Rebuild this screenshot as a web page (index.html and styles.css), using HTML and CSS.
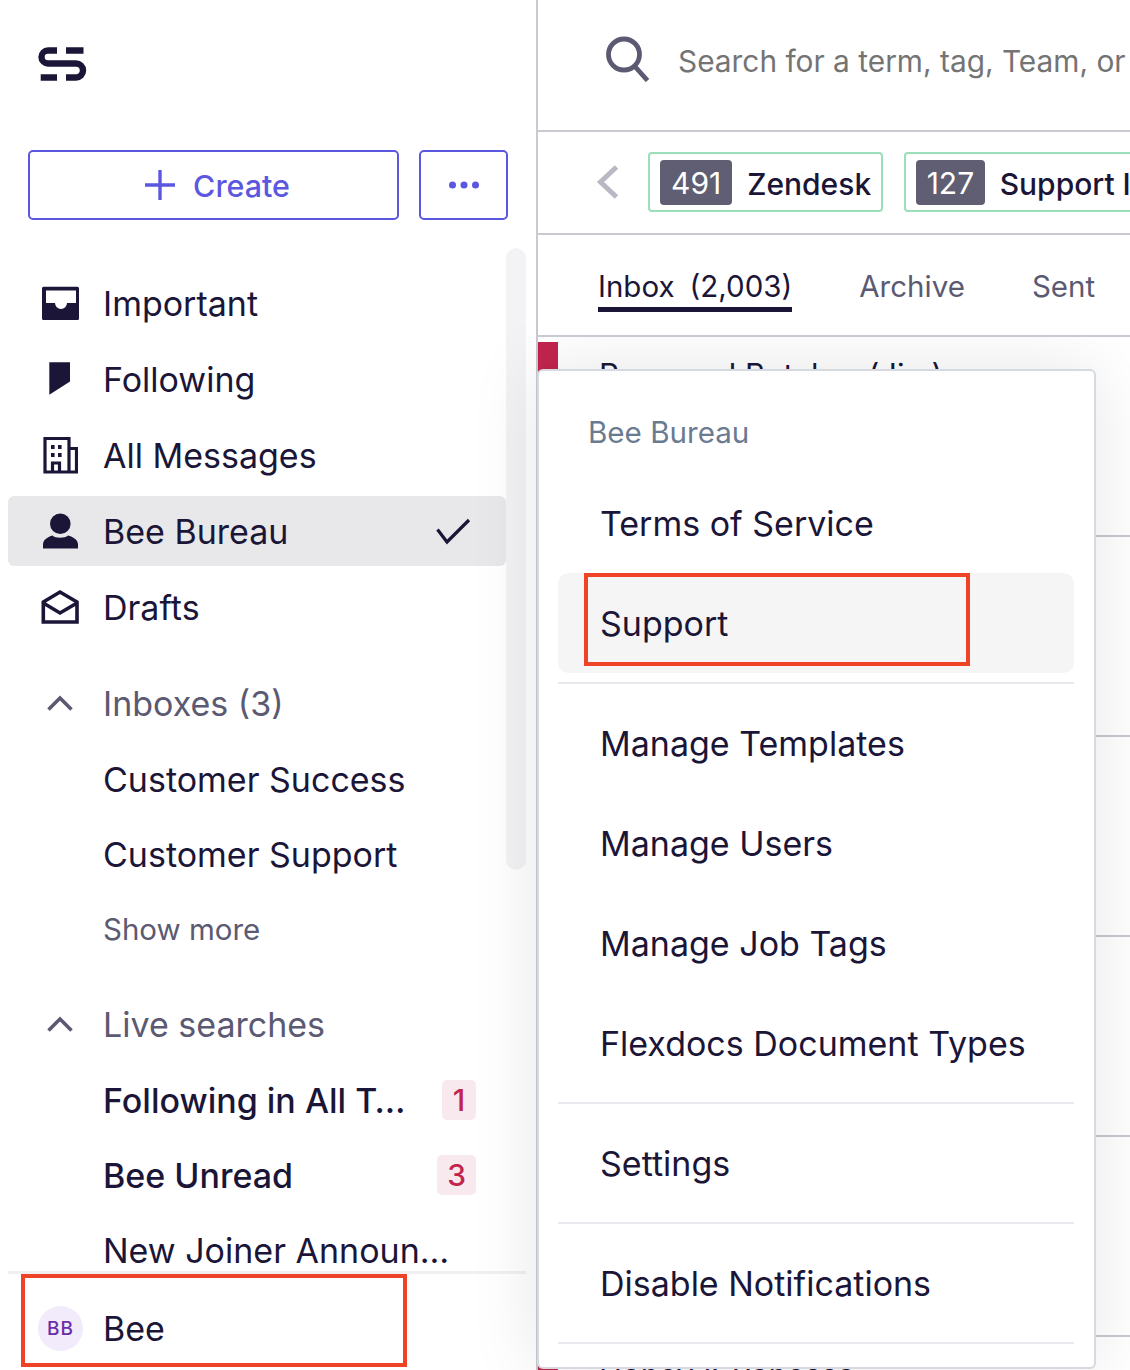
FILE: index.html
```html
<!DOCTYPE html>
<html lang="en">
<head>
<meta charset="utf-8">
<title>Inbox</title>
<link rel="stylesheet" href="styles.css">
</head>
<body>
<div class="app">
  <aside class="sidebar">
    <div class="logo-wrap">
      <svg class="logo" width="60" height="50" viewBox="30 40 60 50" fill="none" stroke="#1b1638" stroke-width="6.4"><path d="M57 50.5H48a6.5 6.5 0 0 0 0 13H76a7 7 0 0 1 0 14H66"/><path d="M40.7 77.5H57M66 50.5H83.5"/></svg>
    </div>
    <div class="actions">
      <button class="btn btn-create"><svg width="32" height="32" viewBox="0 0 32 32" stroke="#5b57e0" stroke-width="3.4"><path d="M16 1V31M1 16H31"/></svg><span class="btn-text">Create</span></button>
      <button class="btn btn-more"><svg width="32" height="8" viewBox="0 0 32 8" fill="#5b57e0"><circle cx="4.5" cy="4" r="3.5"/><circle cx="16" cy="4" r="3.5"/><circle cx="27.5" cy="4" r="3.5"/></svg></button>
    </div>
    <div class="nav-wrap">
      <div class="track"></div>
      <nav class="nav">
        <div class="group">
          <a class="row"><span class="ico"><svg width="38" height="34" viewBox="41 285 38 34"><path fill="#1b1638" fill-rule="evenodd" d="M43.5 285.7H77.5a1.5 1.5 0 0 1 1.5 1.5V317.5a1.5 1.5 0 0 1-1.5 1.5H43.5a1.5 1.5 0 0 1-1.5-1.5V287.2a1.5 1.5 0 0 1 1.5-1.5ZM46 289.5V302H55a6 6 0 0 0 12 0H76V289.5Z"/></svg></span><span>Important</span></a>
          <a class="row"><span class="ico"><svg width="22" height="34" viewBox="50 363 22 34"><path fill="#1b1638" d="M50.3 363.3H71V382.5L50.3 395.7Z"/></svg></span><span>Following</span></a>
          <a class="row"><span class="ico"><svg width="36" height="38" viewBox="42 436 36 38" fill="none" stroke="#1b1638" stroke-width="3.2"><path d="M45 438.5H69V472H45ZM69 448.5H76.5V472H69M52.5 472V463H59.5V472"/><path fill="#1b1638" stroke="none" d="M51 445h3.6v4H51ZM58 445h3.6v4H58ZM51 453h3.6v4H51ZM58 453h3.6v4H58Z"/></svg></span><span>All Messages</span></a>
          <a class="row row-active"><span class="ico"><svg width="36" height="36" viewBox="42 512.5 36 36"><circle cx="60.3" cy="523.3" r="10.3" fill="#1b1638"/><path fill="#1b1638" d="M43 548V544C43 539 48 536.5 52.5 535C55 538 65 538 68 535C73 536.5 78 539 78 544V548Z"/></svg></span><span class="row-label">Bee Bureau</span><svg class="check" width="36" height="28" viewBox="436 519 36 28" fill="none" stroke="#1b1638" stroke-width="3.2"><path d="M438.5 530.5L448 543L470 521"/></svg></a>
          <a class="row"><span class="ico"><svg width="38" height="36" viewBox="41.5 587 38 36" fill="none" stroke="#1b1638" stroke-width="3.6"><path d="M43.8 600L60.5 590L77.5 600V620H43.8ZM43.8 601L60.5 611L77.5 601"/></svg></span><span>Drafts</span></a>
        </div>
        <div class="group group-sub">
          <a class="row row-head"><span class="ico"><svg width="26" height="16" viewBox="0 0 26 16" fill="none" stroke="#5b5a72" stroke-width="3.6"><path d="M1.5 14.5L13 3L24.5 14.5"/></svg></span><span>Inboxes (3)</span></a>
          <a class="row row-inset"><span>Customer Success</span></a>
          <a class="row row-inset"><span>Customer Support</span></a>
          <a class="row row-inset row-more"><span>Show more</span></a>
        </div>
        <div class="group group-sub group-live">
          <a class="row row-head"><span class="ico"><svg width="26" height="16" viewBox="0 0 26 16" fill="none" stroke="#5b5a72" stroke-width="3.6"><path d="M1.5 14.5L13 3L24.5 14.5"/></svg></span><span>Live searches</span></a>
          <a class="row row-inset row-unread"><span class="row-label">Following in All T…</span><span class="count">1</span></a>
          <a class="row row-inset row-unread"><span class="row-label">Bee Unread</span><span class="count">3</span></a>
          <a class="row row-inset"><span>New Joiner Announ…</span></a>
        </div>
      </nav>
    </div>
    <footer class="user">
      <span class="avatar">BB</span><span>Bee</span>
    </footer>
  </aside>

  <main class="main">
    <div class="top">
      <header class="searchbar">
        <svg width="46" height="46" viewBox="604 36 46 46" fill="none" stroke="#5b5a72" stroke-width="4.8"><circle cx="624" cy="54.5" r="15.5"/><path d="M634.5 66L647.5 80.5"/></svg>
        <span class="search-text">Search for a term, tag, Team, or</span>
      </header>
      <div class="chips">
        <svg class="back" width="24" height="36" viewBox="595 164 24 36" fill="none" stroke="#b9b8c4" stroke-width="5"><path d="M616.5 167L600.5 182L616.5 197"/></svg>
        <div class="chip"><span class="chip-count">491</span><span class="chip-name">Zendesk</span></div>
        <div class="chip"><span class="chip-count">127</span><span class="chip-name">Support Inbox</span></div>
      </div>
      <div class="tabs">
        <a class="tab tab-active"><span>Inbox</span><span>(2,003)</span></a>
        <a class="tab">Archive</a>
        <a class="tab">Sent</a>
      </div>
    </div>
    <div class="list">
      <div class="msg"><i class="flag"></i><span>Raymond Butcher (Jim)</span></div>
      <div class="msg"></div>
      <div class="msg"></div>
      <div class="msg"></div>
      <div class="msg"></div>
      <div class="msg"><i class="flag"></i><span>Honey &amp; Vanessa</span></div>
    </div>
  </main>

  <div class="menu">
    <div class="menu-title">Bee Bureau</div>
    <a class="menu-item">Terms of Service</a>
    <a class="menu-item menu-item-hover">Support</a>
    <hr class="menu-sep menu-sep-first">
    <a class="menu-item">Manage Templates</a>
    <a class="menu-item">Manage Users</a>
    <a class="menu-item">Manage Job Tags</a>
    <a class="menu-item">Flexdocs Document Types</a>
    <hr class="menu-sep">
    <a class="menu-item">Settings</a>
    <hr class="menu-sep">
    <a class="menu-item">Disable Notifications</a>
    <hr class="menu-sep">
  </div>

  <div class="mark mark-support"></div>
  <div class="mark mark-user"></div>
</div>
</body>
</html>
```
FILE: styles.css
```css
* { box-sizing: border-box; }
html, body { margin: 0; padding: 0; background: #fff; }
body { font-family: Inter, "Liberation Sans", sans-serif; color: #1b1638; font-size: 34px; }
a { display: block; }

.app { position: relative; display: flex; width: 1130px; height: 1370px; overflow: hidden; }

/* sidebar */
.sidebar { display: flex; flex-direction: column; width: 538px; height: 1370px; flex: none; border-right: 2px solid #c9c9d1; }
.logo-wrap { height: 150px; padding: 40px 0 0 30px; flex: none; }
.logo { display: block; }
.actions { display: flex; gap: 20px; padding-left: 28px; flex: none; }
.btn { display: flex; align-items: center; justify-content: center; height: 70px; background: #fff; border: 2px solid #5b57e0; border-radius: 5px; color: #5b57e0; font: 500 30.4px Inter, sans-serif; padding: 0; }
.btn-create { width: 371px; gap: 17px; padding-left: 7px; }
.btn-text { margin-top: 1px; }
.btn-more { width: 89px; }

.nav-wrap { position: relative; height: 1023px; flex: none; overflow: hidden; margin-top: 28px; }
.track { position: absolute; left: 506px; top: 0; width: 20px; height: 622px; background: #f3f3f5; border-radius: 10px; }
.nav { padding: 20px 0 0 8px; width: 506px; }
.group { display: flex; flex-direction: column; gap: 6px; }
.group-sub { gap: 5px; margin-top: 26px; }
.group-live { margin-top: 25px; }
.row { display: flex; align-items: center; height: 70px; flex: none; white-space: nowrap; padding-right: 35px; border-radius: 6px; }
.row-active { background: #e8e8ea; }
.row-label { flex: 1; }
.ico { display: flex; align-items: center; justify-content: center; width: 95px; flex: none; padding-left: 9px; }
.ico svg { display: block; }
.check { display: block; flex: none; margin-top: 2px; }
.row-head { color: #5b5a72; margin-bottom: 1px; }
.row-inset { padding-left: 95px; }
.row-more { color: #5b5a72; font-size: 29.5px; }
.row-unread { font-weight: 500; padding-right: 30px; }
.count { display: flex; align-items: center; justify-content: center; min-width: 34px; height: 40px; padding: 0 10px; background: #f8e9ef; color: #c2244d; border-radius: 5px; font-size: 30px; font-weight: 500; }

.user { display: flex; align-items: center; height: 97px; margin: 0 0 0 8px; width: 518px; border-top: 3px solid #f0f0f3; padding: 14px 0 0 30px; gap: 20px; flex: none; }
.avatar { display: flex; align-items: center; justify-content: center; width: 45px; height: 45px; border-radius: 50%; background: #f1ebfb; color: #6b2fa8; font-size: 19px; font-weight: 500; letter-spacing: 1px; }

/* main */
.main { flex: 1; min-width: 0; }
.top { position: relative; z-index: 20; background: #fff; }
.searchbar { display: flex; align-items: center; height: 132px; padding: 0 0 8px 66px; gap: 28px; border-bottom: 2px solid #c9c9d1; overflow: hidden; white-space: nowrap; }
.searchbar svg { flex: none; margin-bottom: 4px; }
.search-text { color: #747474; font-size: 29.85px; }
.chips { display: flex; align-items: center; height: 103px; padding: 0 0 2px 57px; border-bottom: 2px solid #c9c9d1; white-space: nowrap; overflow: hidden; }
.back { flex: none; margin-right: 29px; }
.chip { display: flex; align-items: center; height: 60px; padding: 2px 10px 0; border: 2px solid #9bdfb9; border-radius: 4px; margin-right: 21px; flex: none; }
.chip-count { display: flex; align-items: center; justify-content: center; height: 45px; padding: 0 11px; background: #5f5e72; color: #fff; border-radius: 4px; font-size: 30px; margin-right: 15px; }
.chip + .chip .chip-count { padding: 0 10.5px; margin-right: 15px; }
.chip-name { font-size: 30px; font-weight: 500; margin-top: 2px; }
.tabs { display: flex; height: 102px; padding: 0 0 0 60px; gap: 67px; border-bottom: 2px solid #c9c9d1; font-size: 29.5px; color: #5b5a72; white-space: nowrap; }
.tab { height: 77px; padding-top: 30px; line-height: 42px; }
.tab-active { display: flex; gap: 15px; color: #1b1638; border-bottom: 5px solid #1b1638; }

.list { overflow: hidden; }
.msg { display: flex; height: 200px; border-bottom: 2px solid #c9c9d1; }
.flag { display: block; width: 20px; height: 60px; margin-top: 5px; background: #c2244d; flex: none; }
.msg span { margin: 19px 0 0 41px; font-size: 31px; white-space: nowrap; }

/* floating menu */
.menu { position: absolute; z-index: 10; left: 537px; top: 369px; width: 559px; height: 1000px; padding: 20px 20px 0 19px; background: #fff; border: 2px solid #d5d9e0; border-radius: 6px; box-shadow: 0 0 70px rgba(0, 0, 0, .1); }
.menu-title { height: 82px; line-height: 82px; padding-left: 30px; color: #6b7a90; font-size: 29.6px; }
.menu-item { height: 100px; line-height: 102px; padding-left: 42px; white-space: nowrap; }
.menu-sep ~ .menu-item { line-height: 100px; }
.menu-item-hover { background: #f5f5f5; border-radius: 10px; }
.menu-sep { height: 2px; margin: 8px 0 10px; border: 0; background: #e9e9ee; }
.menu-sep-first { margin-top: 9px; margin-bottom: 10px; }

.mark { position: absolute; z-index: 30; border: 4px solid #ef4327; }
.mark-support { left: 584px; top: 573px; width: 386px; height: 93px; }
.mark-user { left: 21px; top: 1274px; width: 386px; height: 93px; }
```
